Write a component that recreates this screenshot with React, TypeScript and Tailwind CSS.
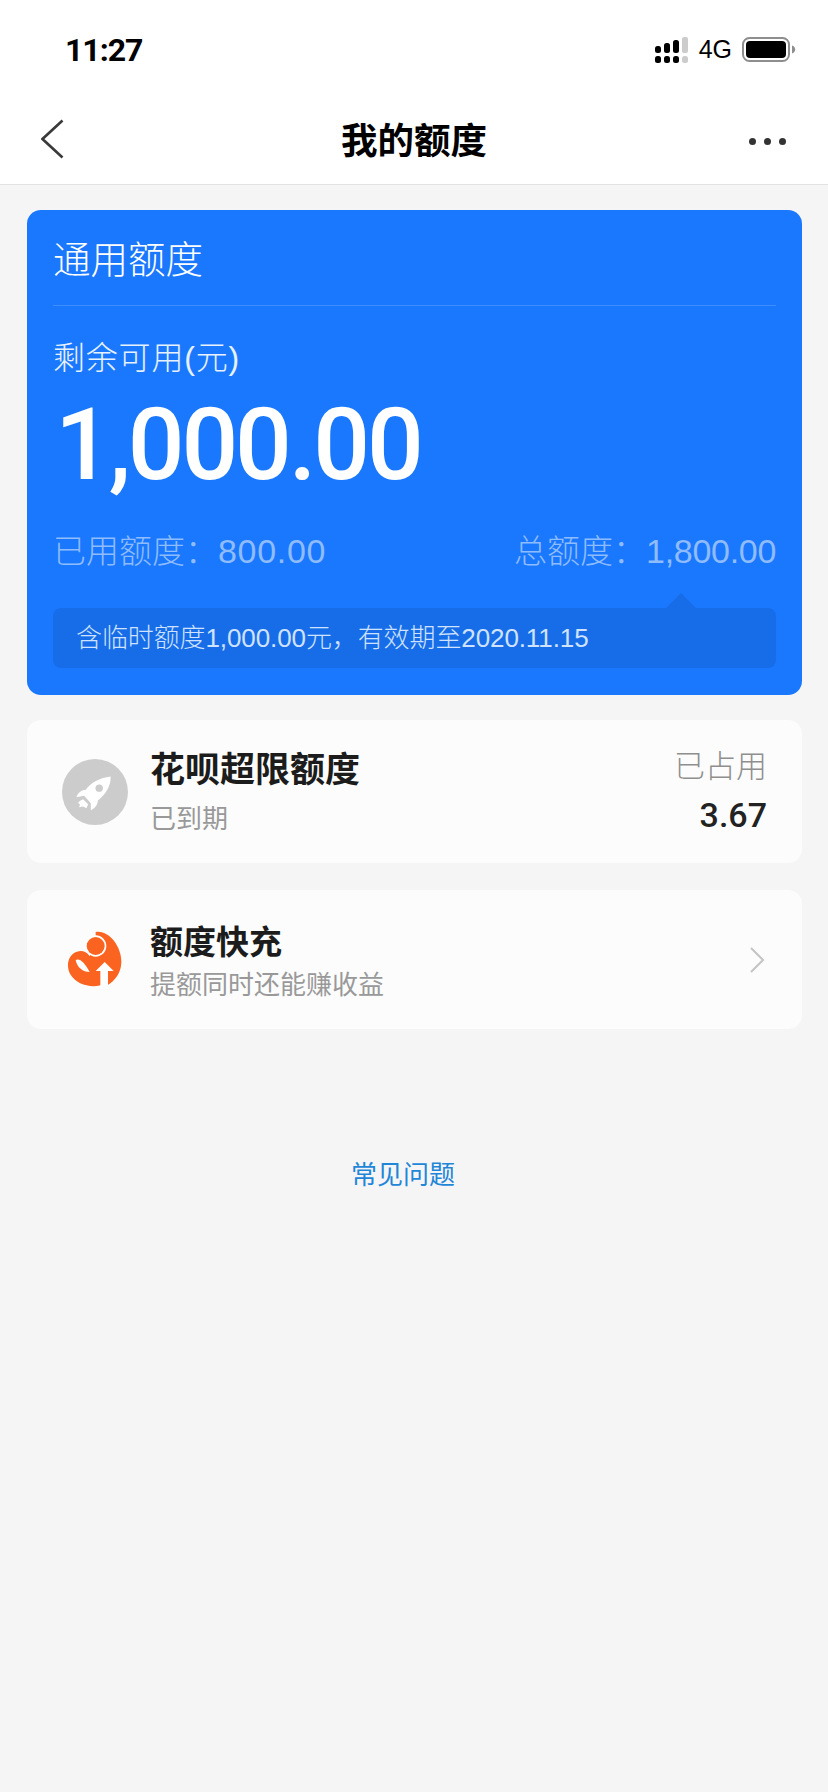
import React from "react";

const sans = "font-['Liberation_Sans','Noto_Sans_CJK_SC',sans-serif]";

function Signal() {
  return (
    <svg width="34" height="26" viewBox="0 0 34 26">
      <g fill="#000">
        <rect x="0" y="9" width="6" height="7" rx="2.5" />
        <rect x="9" y="6" width="6" height="10" rx="2.5" />
        <rect x="18" y="3" width="6" height="13" rx="2.5" />
        <rect x="0" y="19" width="6" height="7" rx="2.5" />
        <rect x="9" y="19" width="6" height="7" rx="2.5" />
        <rect x="18" y="19" width="6" height="7" rx="2.5" />
      </g>
      <rect x="27" y="0" width="6" height="16" rx="2" fill="#cccccc" />
      <rect x="27" y="19" width="6" height="7" rx="2.5" fill="#cccccc" />
    </svg>
  );
}

function Battery() {
  return (
    <svg width="54" height="26" viewBox="0 0 54 26">
      <rect x="1" y="1" width="46" height="23" rx="6.5" fill="none" stroke="#8e8e8e" strokeWidth="2" />
      <rect x="4" y="4" width="40" height="17" rx="4" fill="#000" />
      <path d="M50 8.5c2 .6 3.2 2.2 3.2 4s-1.2 3.4-3.2 4z" fill="#8e8e8e" />
    </svg>
  );
}

function Rocket() {
  return (
    <svg width="66" height="66" viewBox="67 60 197 197">
      <circle cx="165.500" cy="158.500" r="98.500" fill="#cccccc" />
      <path
        d="M212 112C180 116 152 130 138 152C122 153 114 163 110 174L133 170L153 192L153 213C165 208 174 196 174 184C197 165 214 140 212 112z"
        fill="#ffffff"
      />
      <circle cx="178" cy="147" r="11" fill="#cccccc" />
      <path d="M120 185l10-5l15 15l-5 12l-10-5l-12 2l3-8l-6-5z" fill="#ffffff" />
    </svg>
  );
}

function Charge() {
  return (
    <svg width="55" height="57" viewBox="82 55 165 171">
      <path
        d="M168 58C210 52 247 105 245 150C244 180 225 205 205 216L182 218C150 226 110 215 92 185C78 160 85 125 112 117C128 112 140 118 150 130L168 100z"
        fill="#fb6420"
      />
      <circle cx="168" cy="100" r="32" fill="#ffffff" />
      <circle cx="168" cy="100" r="27" fill="#fb6420" />
      <path d="M195 148L222 175L205 175L205 228L182 228L182 175L168 175z" fill="#ffffff" />
      <path d="M108 142C120 135 135 150 150 178C130 178 112 165 108 142z" fill="#ffffff" />
    </svg>
  );
}

export default function App() {
  return (
    <div className={`${sans} w-[828px] h-[1792px] bg-[#f5f5f5] flex flex-col overflow-hidden`}>
      <header className="h-[185px] bg-white border-b border-[#e2e2e2] flex flex-col">
        <div className="h-[91px] flex items-center justify-between pl-[65px] pr-[32px] pt-[8px]">
          <span className="font-['Roboto',sans-serif] text-[32px] font-bold text-black tracking-[-1px] leading-none">11:27</span>
          <div className="flex items-center">
            <Signal />
            <span className="ml-[10px] text-[25px] text-black leading-none">4G</span>
            <span className="ml-[10px] flex"><Battery /></span>
          </div>
        </div>
        <div className="h-[93px] flex items-center justify-between pl-[41px] pr-[42px] pt-[9px]">
          <svg className="-mt-[6px]" width="24" height="40" viewBox="0 0 24 40">
            <path d="M22.500 1.500L2.500 20l20 18.500" transform="translate(-1 0)" fill="none" stroke="#3a3a3a" strokeWidth="2.600" />
          </svg>
          <h1 className="text-[36.5px] font-bold text-black leading-none ml-[14px]">我的额度</h1>
          <div className="flex gap-[8px] -mt-[2px]">
            <span className="w-[7px] h-[7px] rounded-full bg-[#333333]" />
            <span className="w-[7px] h-[7px] rounded-full bg-[#333333]" />
            <span className="w-[7px] h-[7px] rounded-full bg-[#333333]" />
          </div>
        </div>
      </header>

      <main className="pl-[27px] pr-[26px] pt-[25px] flex flex-col flex-1">
        <section className="h-[485px] rounded-[14px] bg-[#1a78ff] px-[26px] flex flex-col">
          <div className="h-[96px] border-b border-[#3d8dff] pt-[30px]">
            <h2 className="text-[37.5px] text-white leading-[40px] font-light">通用额度</h2>
          </div>
          <p className="mt-[33px] text-[32px] leading-[38px] text-white/90 font-light tracking-[0.8px]">剩余可用(元)</p>
          <p className="mt-[22px] ml-[2px] font-['Roboto',sans-serif] font-medium text-[100px] leading-[92px] tracking-[-3.2px] text-white">1,000.00</p>
          <div className="mt-[41px] flex justify-between text-[33px] leading-[38px] text-[#8fbcff] font-light">
            <span>已用额度：<span className="text-[34px] tracking-[0.7px]">800.00</span></span>
            <span>总额度：<span className="text-[34px] tracking-[-0.3px]">1,800.00</span></span>
          </div>
          <div className="relative mt-[37px] h-[60px] rounded-[8px] bg-[#176de8] flex items-center px-[23px]">
            <span className="absolute -top-[15px] right-[80px] w-0 h-0 border-x-[15px] border-x-transparent border-b-[15px] border-b-[#176de8]" />
            <span className="text-[26px] text-[#cfe2ff] font-light leading-none tracking-[-0.1px]">含临时额度1,000.00元，有效期至2020.11.15</span>
          </div>
        </section>

        <section className="mt-[25px] h-[143px] rounded-[14px] bg-[#fcfcfc] flex items-center pl-[35px] pr-[35px]">
          <Rocket />
          <div className="ml-[22px] flex-1">
            <p className="text-[35px] leading-[42px] font-bold text-[#1c1c1c]">花呗超限额度</p>
            <p className="mt-[13px] text-[26px] leading-[30px] text-[#999999]">已到期</p>
          </div>
          <div className="text-right">
            <p className="text-[31px] leading-[38px] text-[#8f8f8f] font-light">已占用</p>
            <p className="mt-[9px] font-['Roboto',sans-serif] font-medium text-[34px] leading-[40px] text-[#222222]">3.67</p>
          </div>
        </section>

        <section className="mt-[27px] h-[139px] rounded-[14px] bg-[#fcfcfc] flex items-center pl-[40px] pr-[37px]">
          <Charge />
          <div className="ml-[28px] flex-1 pt-[5px]">
            <p className="text-[33px] leading-[40px] font-bold text-[#1c1c1c]">额度快充</p>
            <p className="mt-[5px] text-[26px] leading-[34px] text-[#999999]">提额同时还能赚收益</p>
          </div>
          <svg width="16" height="28" viewBox="0 0 16 28">
            <path d="M2 2l12 12L2 26" fill="none" stroke="#c4c4c4" strokeWidth="2" />
          </svg>
        </section>

        <p className="mt-[130px] text-center text-[26px] leading-[32px] text-[#1f86d8] pr-[23px]">常见问题</p>
      </main>
    </div>
  );
}
